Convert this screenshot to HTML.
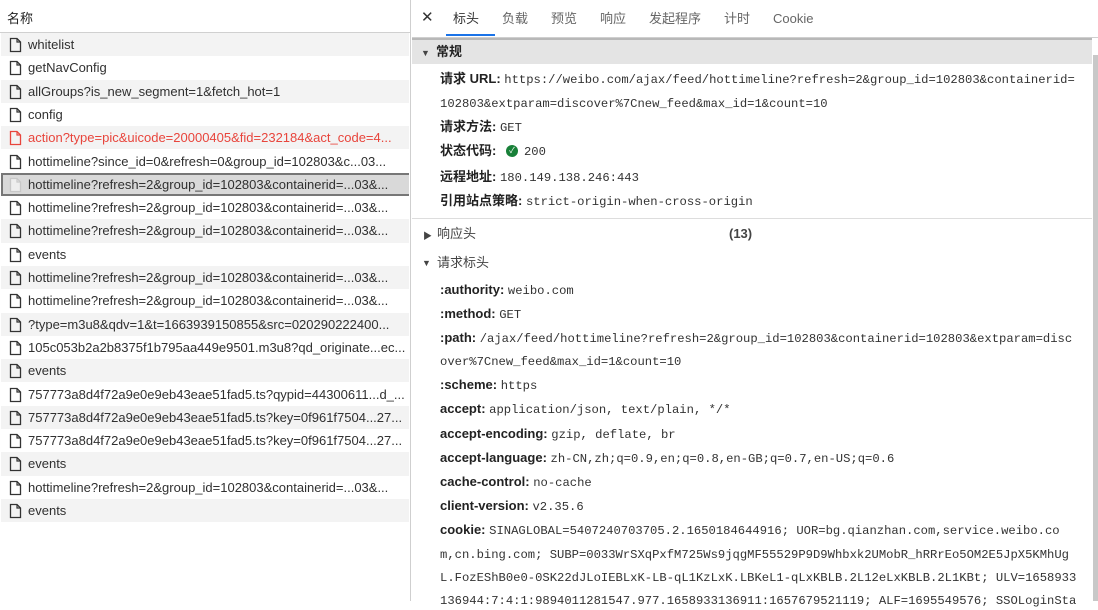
<!DOCTYPE html>
<html><head><meta charset="utf-8"><style>
*{margin:0;padding:0;box-sizing:border-box}
body{width:1098px;height:601px;overflow:hidden;background:#fff;font-family:"Liberation Sans","Noto Sans CJK SC",sans-serif;color:#222;position:relative}
#left{position:absolute;left:0;top:0;width:411px;height:601px;border-right:1px solid #cfcfcf;background:#fff}
#lh{height:33px;border-bottom:1px solid #d0d0d0;font-size:13px;padding:8px 0 0 7px;color:#222;background:#fff}
.r{position:absolute;left:1px;width:408px;height:23.3px;font-size:13px;line-height:23px;padding-left:27px;white-space:nowrap;overflow:hidden;color:#303030}
.r.g{background:#f3f3f3}
.r.sel{background:#d9d9d9;border:2px solid #777;border-right:none;line-height:19px;padding-left:25px}
.r.red{color:#e8453c}
.r svg{position:absolute;left:8px;top:4px}
.r.sel svg{left:6px;top:2px}
#right{position:absolute;left:412px;top:0;width:686px;height:601px}
#tabs{height:38px;border-bottom:1px solid #cfcfcf;font-size:13px;color:#666;position:relative}
#tabs span{position:absolute;top:11px;line-height:16px;height:16px}
#gen{position:absolute;left:0;top:38px;width:680px;height:26px;background:#e4e4e4;border-top:2px solid #b8b8b8;font-size:13px;font-weight:bold;line-height:24px;padding-left:24px}
.t{position:absolute;font-size:13px;white-space:nowrap;line-height:18px}
.k{font-weight:bold;color:#222}
.m{font-family:"Liberation Mono",monospace;font-size:12.2px;color:#333}
.tri{position:absolute;font-size:9px;color:#444}
</style></head><body>
<div id="left">
<div id="lh">名称</div>
</div>
<div id="rows"></div>
<div id="right">
<div id="tabs">
<span style="left:9px;font-size:15px;color:#333;top:10px">✕</span>
<span style="left:41px;color:#333">标头</span>
<div style="position:absolute;left:34px;top:34px;width:49px;height:2px;background:#1a73e8"></div>
<span style="left:90px">负载</span>
<span style="left:139px">预览</span>
<span style="left:188px">响应</span>
<span style="left:237px">发起程序</span>
<span style="left:312px">计时</span>
<span style="left:361px">Cookie</span>
</div>
<div id="gen"><span class="tri" style="left:9px;top:1px">▼</span>常规</div>
<div style="position:absolute;left:681px;top:55px;width:5px;height:546px;background:#c8c8c8"></div>
<div style="position:absolute;left:0;top:218px;width:680px;height:1px;background:#ddd"></div>
</div>
<div id="content"></div>
<script>
var names=[["whitelist"],["getNavConfig"],["allGroups?is_new_segment=1&fetch_hot=1"],["config"],["action?type=pic&uicode=20000405&fid=232184&act_code=4...","red"],["hottimeline?since_id=0&refresh=0&group_id=102803&c...03..."],["hottimeline?refresh=2&group_id=102803&containerid=...03&...","sel"],["hottimeline?refresh=2&group_id=102803&containerid=...03&..."],["hottimeline?refresh=2&group_id=102803&containerid=...03&..."],["events"],["hottimeline?refresh=2&group_id=102803&containerid=...03&..."],["hottimeline?refresh=2&group_id=102803&containerid=...03&..."],["?type=m3u8&qdv=1&t=1663939150855&src=020290222400..."],["105c053b2a2b8375f1b795aa449e9501.m3u8?qd_originate...ec..."],["events"],["757773a8d4f72a9e0e9eb43eae51fad5.ts?qypid=44300611...d_..."],["757773a8d4f72a9e0e9eb43eae51fad5.ts?key=0f961f7504...27..."],["757773a8d4f72a9e0e9eb43eae51fad5.ts?key=0f961f7504...27..."],["events"],["hottimeline?refresh=2&group_id=102803&containerid=...03&..."],["events"]];
var h="";
names.forEach(function(n,i){
 var y=33+i*23.3;var c="r"+(i%2==0?" g":"")+(n[1]?" "+n[1]:"");
 var col=n[1]=="red"?"#e8453c":(n[1]=="sel"?"#c8c8c8":"#333");
 var fill=n[1]=="sel"?"#eee":"none";
 h+='<div class="'+c+'" style="top:'+y+'px"><svg width="13" height="16" viewBox="0 0 13 16"><path d="M1.5 1.5h6.5l3.5 3.5v9.5h-10z" fill="'+fill+'" stroke="'+col+'" stroke-width="1.3"/><path d="M8 1.5v3.5h3.5" fill="none" stroke="'+col+'" stroke-width="1.2"/></svg>'+n[0].replace(/&/g,"&amp;")+'</div>';
});
document.getElementById("rows").innerHTML=h;
var L=[
[79,'<span class="k">请求 URL:</span> <span class="m">https://weibo.com/ajax/feed/hottimeline?refresh=2&amp;group_id=102803&amp;containerid=</span>'],
[103,'<span class="m">102803&amp;extparam=discover%7Cnew_feed&amp;max_id=1&amp;count=10</span>'],
[127,'<span class="k">请求方法:</span> <span class="m">GET</span>'],
[151,'<span class="k">状态代码:</span> <span style="display:inline-block;width:12px;height:12px;border-radius:50%;background:#188038;color:#fff;font-size:8px;line-height:12px;text-align:center;vertical-align:2px;margin:0 6px 0 6px">✓</span><span class="m">200</span>'],
[177,'<span class="k">远程地址:</span> <span class="m">180.149.138.246:443</span>'],
[201,'<span class="k">引用站点策略:</span> <span class="m">strict-origin-when-cross-origin</span>'],
[290,'<span class="k">:authority:</span> <span class="m">weibo.com</span>'],
[314,'<span class="k">:method:</span> <span class="m">GET</span>'],
[338,'<span class="k">:path:</span> <span class="m">/ajax/feed/hottimeline?refresh=2&amp;group_id=102803&amp;containerid=102803&amp;extparam=disc</span>'],
[361,'<span class="m">over%7Cnew_feed&amp;max_id=1&amp;count=10</span>'],
[385,'<span class="k">:scheme:</span> <span class="m">https</span>'],
[409,'<span class="k">accept:</span> <span class="m">application/json, text/plain, */*</span>'],
[434,'<span class="k">accept-encoding:</span> <span class="m">gzip, deflate, br</span>'],
[458,'<span class="k">accept-language:</span> <span class="m">zh-CN,zh;q=0.9,en;q=0.8,en-GB;q=0.7,en-US;q=0.6</span>'],
[482,'<span class="k">cache-control:</span> <span class="m">no-cache</span>'],
[506,'<span class="k">client-version:</span> <span class="m">v2.35.6</span>'],
[530,'<span class="k">cookie:</span> <span class="m">SINAGLOBAL=5407240703705.2.1650184644916; UOR=bg.qianzhan.com,service.weibo.co</span>'],
[554,'<span class="m">m,cn.bing.com; SUBP=0033WrSXqPxfM725Ws9jqgMF55529P9D9Whbxk2UMobR_hRRrEo5OM2E5JpX5KMhUg</span>'],
[577,'<span class="m">L.FozEShB0e0-0SK22dJLoIEBLxK-LB-qL1KzLxK.LBKeL1-qLxKBLB.2L12eLxKBLB.2L1KBt; ULV=1658933</span>'],
[600,'<span class="m">136944:7:4:1:9894011281547.977.1658933136911:1657679521119; ALF=1695549576; SSOLoginSta</span>']
];
var c="";
L.forEach(function(l){c+='<div class="t" style="left:440px;top:'+(l[0]-9)+'px">'+l[1]+'</div>';});
c+='<div class="t" style="left:437px;top:225px;color:#444">响应头</div><span class="tri" style="left:423px;top:229px">▶</span>';
c+='<div class="t" style="left:729px;top:225px;font-weight:bold;color:#444">(13)</div>';
c+='<div class="t" style="left:437px;top:254px;color:#444">请求标头</div><span class="tri" style="left:422px;top:258px">▼</span>';
document.getElementById("content").innerHTML=c;
</script>
</body></html>
